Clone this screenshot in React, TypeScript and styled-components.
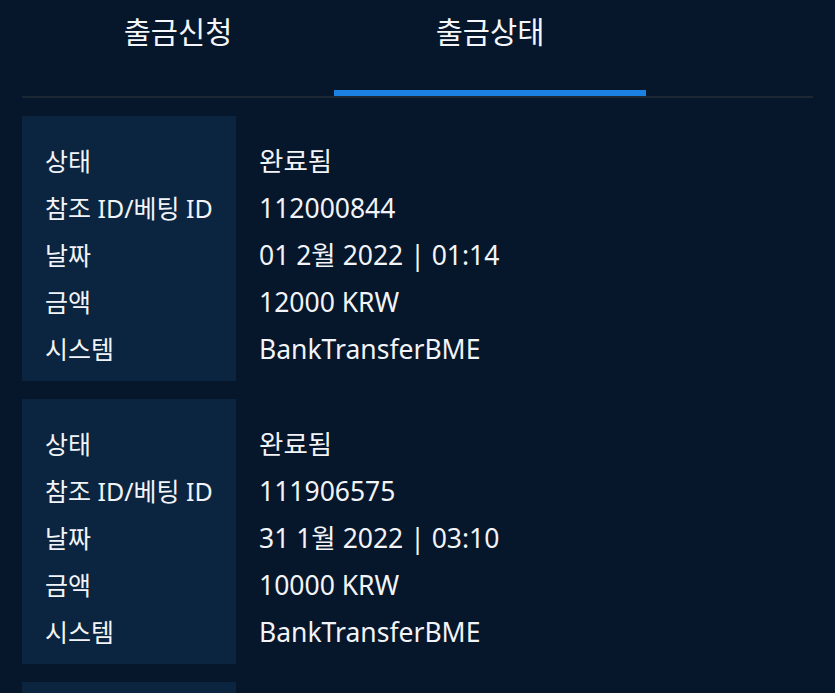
import styled, {createGlobalStyle} from "styled-components";

const GlobalStyle = createGlobalStyle`
  html, body {
    margin: 0;
    padding: 0;
    background-color: #06162b;
  }
  body {
    font-family: "Noto Sans", "Noto Sans CJK KR", sans-serif;
    color: #f2f4f7;
    overflow: hidden;
  }
`

const Page = styled.main`
  padding: 0 22px;
  height: 693px;
  overflow: hidden;
`

const TabBar = styled.nav`
  display: flex;
  border-bottom: 2px solid #1b2735;
`

const Tab = styled.div<{ $active?: boolean }>`
  width: 312px;
  height: 96px;
  padding-top: 10px;
  box-sizing: border-box;
  text-align: center;
  font-family: "Noto Sans CJK KR", "Noto Sans", sans-serif;
  font-size: 29.5px;
  line-height: 40px;
  color: #f4f6f9;
  border-bottom: 6px solid ${p => p.$active ? "#1a80e2" : "transparent"};
`

const List = styled.section`
  display: flex;
  flex-direction: column;
  gap: 18px;
  padding-top: 18px;
`

const Card = styled.article`
  display: grid;
  grid-template-columns: 214px 1fr;
`

const Column = styled.div<{ $label?: boolean }>`
  display: flex;
  flex-direction: column;
  padding: 22px 0 8px 23px;
  background-color: ${p => p.$label ? "#0b2540" : "transparent"};
  font-size: ${p => p.$label ? "25px" : "26.5px"};
`

const Cell = styled.div`
  height: 47px;
  line-height: 47px;
  white-space: nowrap;
  color: #f2f4f7;
`

const labels = ["상태", "참조 ID/베팅 ID", "날짜", "금액", "시스템"];

const withdrawals = [
    {status: "완료됨", id: "112000844", date: "01 2월 2022 | 01:14", amount: "12000 KRW", system: "BankTransferBME"},
    {status: "완료됨", id: "111906575", date: "31 1월 2022 | 03:10", amount: "10000 KRW", system: "BankTransferBME"},
    {status: "완료됨", id: "111842310", date: "30 1월 2022 | 22:41", amount: "10000 KRW", system: "BankTransferBME"},
];

export default function App() {
    return (
        <Page>
            <GlobalStyle/>
            <TabBar>
                <Tab>출금신청</Tab>
                <Tab $active>출금상태</Tab>
            </TabBar>
            <List>
                {withdrawals.map(w => (
                    <Card key={w.id}>
                        <Column $label>
                            {labels.map(l => <Cell key={l}>{l}</Cell>)}
                        </Column>
                        <Column>
                            <Cell>{w.status}</Cell>
                            <Cell>{w.id}</Cell>
                            <Cell>{w.date}</Cell>
                            <Cell>{w.amount}</Cell>
                            <Cell>{w.system}</Cell>
                        </Column>
                    </Card>
                ))}
            </List>
        </Page>
    )
}
